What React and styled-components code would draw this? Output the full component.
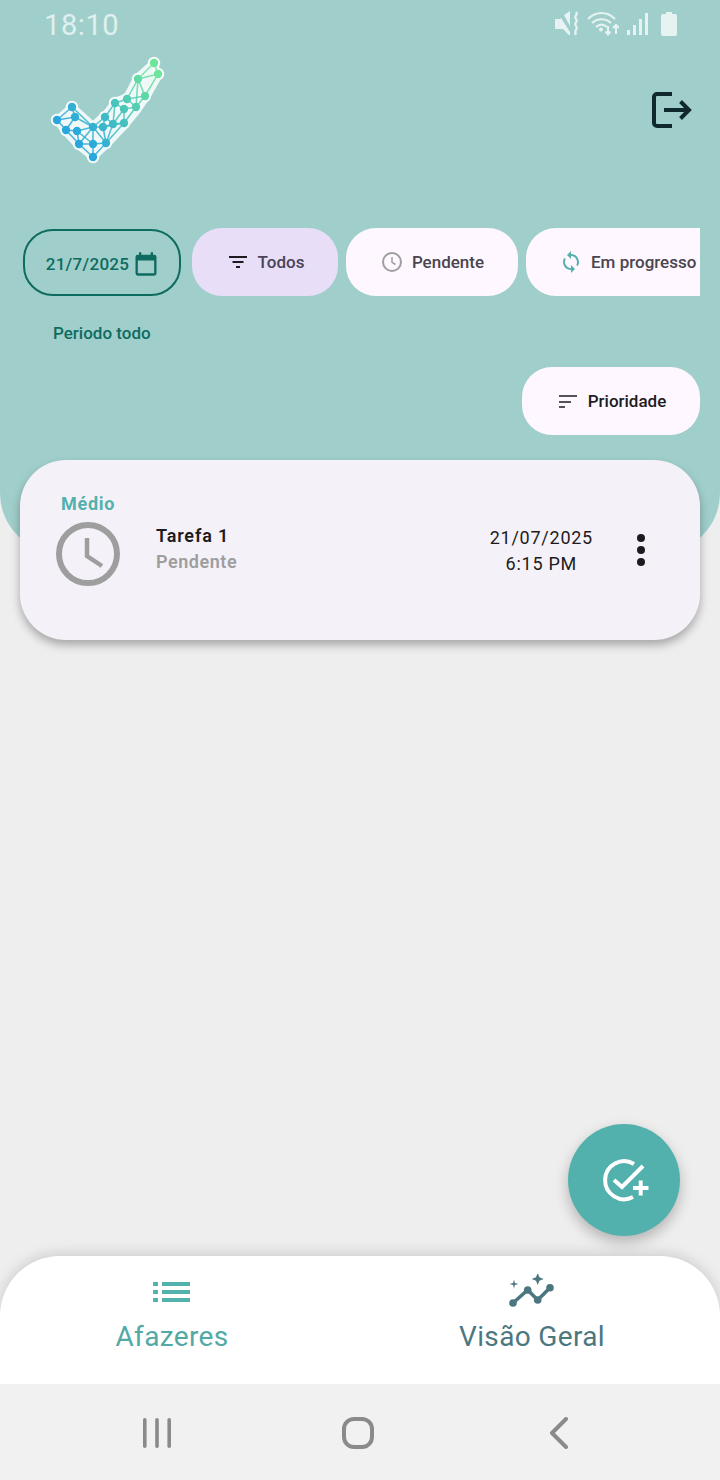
import React from "react";
import styled, { createGlobalStyle } from "styled-components";

const Global = createGlobalStyle`
  html, body { margin: 0; padding: 0; background: #eeeeee; }
  * { box-sizing: border-box; }
  body { font-family: Roboto, "Liberation Sans", sans-serif; }
`;

const Page = styled.div`
  position: relative;
  width: 720px;
  height: 1480px;
  display: flex;
  flex-direction: column;
  overflow: hidden;
  background: #eeeeee;
`;

const Header = styled.header`
  height: 553px;
  flex: none;
  background: #a0cfcb;
  border-radius: 0 0 60px 60px;
  display: flex;
  flex-direction: column;
`;

const StatusBar = styled.div`
  height: 50px;
  padding: 0 43px 0 44px;
  display: flex;
  align-items: center;
  justify-content: space-between;
`;

const Time = styled.span`
  font-size: 29px;
  line-height: 50px;
  color: #dff0ee;
  letter-spacing: 0.6px;
`;

const StatusIcons = styled.div`
  display: flex;
  align-items: center;
  height: 50px;
  margin-top: -2px;
`;

const TopRow = styled.div`
  height: 128px;
  padding: 0 28px 0 40px;
  display: flex;
  align-items: flex-start;
  justify-content: space-between;
`;

const LogoutWrap = styled.div`
  margin-top: 42px;
  line-height: 0;
`;

const Chips = styled.div`
  margin: 50px 20px 0 23px;
  display: flex;
  gap: 8px;
  overflow: hidden;
  align-items: flex-start;
`;

const DateColumn = styled.div`
  flex: none;
  width: 158px;
  margin-right: 3px;
`;

const DateChip = styled.div`
  height: 67px;
  margin-top: 1px;
  border: 2px solid #0e6b5f;
  border-radius: 30px;
  display: flex;
  align-items: center;
  justify-content: center;
  gap: 3px;
  padding: 2px 0 0 2px;
  color: #0e6b5f;
  font-size: 17px;
  font-weight: 500;
  letter-spacing: 0.3px;
`;

const Chip = styled.div`
  flex: none;
  width: ${(p) => p.$w}px;
  height: 68px;
  border-radius: ${(p) => (p.$clip ? "30px 0 0 30px" : "30px")};
  background: ${(p) => p.$bg || "#fef7ff"};
  color: ${(p) => p.$color || "#49454f"};
  display: flex;
  align-items: center;
  justify-content: ${(p) => (p.$clip ? "flex-start" : "center")};
  padding-left: ${(p) => (p.$clip ? "33px" : "0")};
  gap: 8px;
  font-size: 17px;
  font-weight: 500;
  white-space: nowrap;
`;

const PeriodLabel = styled.div`
  margin: 26px 0 0 30px;
  font-size: 17px;
  line-height: 22px;
  font-weight: 500;
  white-space: nowrap;
  color: #0e6b5f;
`;

const SortRow = styled.div`
  margin-top: 23px;
  padding-right: 20px;
  display: flex;
  justify-content: flex-end;
`;

const Card = styled.article`
  flex: none;
  position: relative;
  margin: -93px 20px 0;
  height: 180px;
  border-radius: 46px;
  background: #f5f1f9;
  box-shadow: 0 5px 10px rgba(0, 0, 0, 0.3);
  padding: 32px 36px 0 36px;
`;

const Priority = styled.div`
  margin-left: 5px;
  font-size: 18px;
  line-height: 24px;
  font-weight: 700;
  letter-spacing: 0.7px;
  color: #52b1ad;
`;

const CardRow = styled.div`
  display: flex;
  align-items: flex-start;
  margin-top: 6px;
`;

const TaskText = styled.div`
  margin-left: 36px;
  flex: 1;
`;

const TaskTitle = styled.div`
  font-size: 18px;
  line-height: 26px;
  margin-top: 1px;
  font-weight: 600;
  letter-spacing: 0.85px;
  color: #1d1b20;
`;

const TaskStatus = styled.div`
  font-size: 18px;
  line-height: 26px;
  font-weight: 600;
  letter-spacing: 0.55px;
  color: #9e9e9e;
`;

const When = styled.div`
  text-align: center;
  font-size: 18px;
  line-height: 26px;
  margin-top: 3px;
  letter-spacing: 0.75px;
  color: #1d1b20;
`;

const More = styled.div`
  margin: 11px 18px 0 43px;
  line-height: 0;
`;

const Spacer = styled.main`
  flex: 1;
`;

const Fab = styled.button`
  position: absolute;
  left: 568px;
  top: 1124px;
  width: 112px;
  height: 112px;
  border: 0;
  padding: 0;
  border-radius: 50%;
  background: #52b1ad;
  box-shadow: 0 6px 14px rgba(0, 0, 0, 0.25);
  display: flex;
  align-items: center;
  justify-content: center;
`;

const BottomNav = styled.nav`
  flex: none;
  height: 128px;
  background: #ffffff;
  border-radius: 60px 60px 0 0;
  box-shadow: 0 -2px 14px rgba(0, 0, 0, 0.15);
  display: flex;
  position: relative;
`;

const Tab = styled.div`
  flex: none;
  width: ${(p) => p.$w}px;
  display: flex;
  flex-direction: column;
  align-items: center;
  padding-top: 16px;
  color: ${(p) => p.$color};
`;

const TabIcon = styled.div`
  height: 40px;
  display: flex;
  align-items: center;
  margin-bottom: 9px;
`;

const TabLabel = styled.div`
  font-size: 28px;
  line-height: 32px;
  letter-spacing: 0.35px;
`;

const SystemBar = styled.div`
  flex: none;
  height: 96px;
  padding-top: 2px;
  background: #f1f1f1;
  display: flex;
  align-items: center;
  position: relative;
`;

const SysSlot = styled.div`
  flex: none;
  width: ${(p) => p.$w}px;
  margin-left: ${(p) => p.$ml}px;
  line-height: 0;
`;

const Logo = () => {
  const nodes = [
    [154, 63], [158, 74], [138, 79], [145, 96], [127, 99], [115, 103], [136, 107], [105, 117],
    [124, 123], [113, 124], [103, 127], [93, 127], [72, 107], [57, 120], [75, 117], [66, 130],
    [79, 144], [93, 144], [106, 143], [93, 157], [77, 131], [124, 109],
  ];
  const links = [
    [0, 1], [0, 2], [1, 2], [1, 3], [2, 3], [2, 4], [3, 6], [3, 4], [4, 5], [4, 6], [5, 7], [5, 21], [21, 6], [21, 8], [6, 8], [7, 9],
    [7, 11], [8, 9], [9, 10], [10, 11], [8, 18], [9, 18], [10, 18], [11, 18], [18, 17], [18, 19], [11, 17], [11, 16], [11, 20], [11, 14],
    [12, 13], [12, 14], [13, 14], [13, 15], [14, 15], [15, 20], [15, 16], [20, 16], [20, 17], [16, 17], [16, 19], [17, 19], [12, 11],
    [5, 9], [21, 9], [7, 10], [2, 6], [8, 10],
  ];
  const hull = "154,59 162,75 149,98 140,111 127,127 108,147 93,161 76,147 63,133 53,120 72,103 93,122 104,112 114,99 125,95 135,76";
  return (
    <svg width="130" height="120" viewBox="40 50 130 120" style={{ display: "block" }}>
      <defs>
        <linearGradient id="lg" gradientUnits="userSpaceOnUse" x1="75" y1="135" x2="150" y2="70">
          <stop offset="0" stopColor="#29a7dc" />
          <stop offset="0.45" stopColor="#45c0c0" />
          <stop offset="1" stopColor="#6de59b" />
        </linearGradient>
      </defs>
      <polygon points={hull} fill="#eef8f7" stroke="#eef8f7" strokeWidth="2" strokeLinejoin="round" />
      <g fill="#f4fbfa">
        {nodes.map(([x, y], i) => (
          <circle key={i} cx={x} cy={y} r="6.200" />
        ))}
      </g>
      <g stroke="url(#lg)" fill="url(#lg)">
        {links.map(([a, b], i) => (
          <line key={i} x1={nodes[a][0]} y1={nodes[a][1]} x2={nodes[b][0] + 0.01} y2={nodes[b][1] + 0.01} strokeWidth="1.500" opacity="0.85" />
        ))}
        {nodes.map(([x, y], i) => (
          <circle key={i} cx={x} cy={y} r="4.200" stroke="none" />
        ))}
      </g>
    </svg>
  );
};

const MuteIcon = () => (
  <svg width="26" height="26" viewBox="0 0 26 26" style={{ display: "block" }}>
    <path d="M0 8h5l1-1 9 14v3h-1l-6-6H0z" fill="#e6f3f2" />
    <path d="M9 4l6-4v15z" fill="#e6f3f2" />
    <path d="M21 1c3 3-3 4 0 7s-3 4 0 7-3 4 0 9" stroke="#e6f3f2" strokeWidth="2.200" fill="none" />
  </svg>
);

const WifiIcon = () => (
  <svg width="32" height="26" viewBox="0 0 32 26" style={{ display: "block", marginLeft: 6 }}>
    <path d="M1 8c8-8 19-8 27 0" stroke="#e6f3f2" strokeWidth="2.200" fill="none" />
    <path d="M5 12c5.500-5 13.500-5 19 0" stroke="#e6f3f2" strokeWidth="2.200" fill="none" />
    <path d="M9 16c3.500-3 7.500-3 11 0" stroke="#e6f3f2" strokeWidth="2.200" fill="none" />
    <circle cx="14" cy="18.500" r="2" fill="#e6f3f2" />
    <path d="M21 15v8M18.500 20.500l2.500 3 2.500-3" stroke="#e6f3f2" strokeWidth="2" fill="none" />
    <path d="M29 23v-9M26 17l3-3 3 3" stroke="#e6f3f2" strokeWidth="2" fill="none" />
  </svg>
);

const SignalIcon = () => (
  <svg width="22" height="24" viewBox="0 0 22 24" style={{ display: "block", marginLeft: 8 }}>
    <rect x="0" y="18" width="3" height="5" fill="#e6f3f2" />
    <rect x="6" y="13" width="3" height="10" fill="#e6f3f2" />
    <rect x="12" y="7" width="3" height="16" fill="#e6f3f2" />
    <rect x="18" y="1" width="3" height="22" fill="#e6f3f2" />
  </svg>
);

const BatteryIcon = () => (
  <svg width="16" height="24" viewBox="0 0 16 24" style={{ display: "block", marginLeft: 12 }}>
    <path d="M5 0h6v2h3a2 2 0 0 1 2 2v18a2 2 0 0 1-2 2H2a2 2 0 0 1-2-2V4a2 2 0 0 1 2-2h3z" fill="#e6f3f2" />
  </svg>
);

const LogoutIcon = () => (
  <svg width="40" height="36" viewBox="0 0 40 36" fill="none" stroke="#10292f" strokeWidth="4">
    <path d="M20 2H5a3 3 0 0 0-3 3v26a3 3 0 0 0 3 3h15" />
    <path d="M12 18h25M28.500 9.500l8.500 8.500-8.500 8.500" />
  </svg>
);

const CalendarIcon = () => (
  <svg width="28" height="28" viewBox="0 0 24 24" fill="#0e6b5f">
    <path d="M19 4h-1V2h-2v2H8V2H6v2H5a2 2 0 0 0-2 2v14a2 2 0 0 0 2 2h14a2 2 0 0 0 2-2V6a2 2 0 0 0-2-2zm0 16H5V9h14z" />
  </svg>
);

const FilterIcon = () => (
  <svg width="24" height="24" viewBox="0 0 24 24" fill="#1d1b20">
    <path d="M3 6h18v2H3zM6.500 11h11v2h-11zM10 16h4v2h-4z" />
  </svg>
);

const ClockSmall = () => (
  <svg width="24" height="24" viewBox="0 0 24 24" fill="none" stroke="#9e9e9e" strokeWidth="2">
    <circle cx="12" cy="12" r="9" />
    <path d="M12 7v5.300l3.500 2.200" strokeWidth="1.500" />
  </svg>
);

const SyncIcon = () => (
  <svg width="24" height="24" viewBox="0 0 24 24" fill="#52b1ad">
    <path d="M12 4V1L8 5l4 4V6c3.310 0 6 2.690 6 6 0 1.010-.25 1.970-.7 2.800l1.460 1.460C19.540 15.030 20 13.570 20 12c0-4.420-3.580-8-8-8zm0 14c-3.310 0-6-2.690-6-6 0-1.010.25-1.970.7-2.800L5.240 7.740C4.460 8.970 4 10.430 4 12c0 4.420 3.580 8 8 8v3l4-4-4-4z" />
  </svg>
);

const SortIcon = () => (
  <svg width="24" height="24" viewBox="0 0 24 24" fill="#55505a">
    <path d="M3 6h18v2H3zM3 12h12v2H3zM3 17h6v2H3z" />
  </svg>
);

const ClockLarge = () => (
  <svg width="64" height="64" viewBox="0 0 64 64" fill="none" stroke="#9e9e9e" style={{ flex: "none" }}>
    <circle cx="32" cy="32" r="29" strokeWidth="6" />
    <path d="M31 16v18l15 10" strokeWidth="4.500" />
  </svg>
);

const DotsIcon = () => (
  <svg width="10" height="34" viewBox="0 0 10 34" fill="#1d1b20">
    <circle cx="5" cy="5" r="4" />
    <circle cx="5" cy="17" r="4" />
    <circle cx="5" cy="29" r="4" />
  </svg>
);

const FabIcon = () => (
  <svg width="56" height="56" viewBox="0 0 56 56" fill="none" stroke="#ffffff" strokeWidth="4">
    <path d="M38 12A19 19 0 1 0 37 45" />
    <path d="M18 28l8 7L47 14" />
    <path d="M37 36h15.500M44.700 28.500v15" />
  </svg>
);

const ListIcon = () => (
  <svg width="38" height="20" viewBox="0 0 38 20" fill="#52b1ad">
    <rect x="0" y="0" width="5" height="4" />
    <rect x="0" y="8" width="5" height="4" />
    <rect x="0" y="16" width="5" height="4" />
    <rect x="9" y="0" width="28" height="4" />
    <rect x="9" y="8" width="28" height="4" />
    <rect x="9" y="16" width="28" height="4" />
  </svg>
);

const InsightsIcon = () => (
  <svg width="46" height="34" viewBox="0 0 46 34" fill="#4c7780" style={{ marginTop: -3 }}>
    <circle cx="4" cy="29" r="3.800" />
    <circle cx="18.700" cy="16" r="3.800" />
    <circle cx="28.700" cy="26" r="3.800" />
    <circle cx="41" cy="13.700" r="3.800" />
    <path d="M4 29L18.700 16l10 10L41 13.700" fill="none" stroke="#4c7780" strokeWidth="3.500" />
    <path d="M28.700-1l1.700 4.300L34.700 5l-4.300 1.700L28.700 11 27 6.700 22.700 5 27 3.300z" />
    <path d="M5 5.500l.9 3.600 3.600.9-3.600.9-.9 3.600-.9-3.600-3.600-.9 3.600-.9z" />
  </svg>
);

const RecentsIcon = () => (
  <svg width="30" height="32" viewBox="0 0 30 32" fill="#8a8a8a">
    <rect x="1" y="1" width="3.600" height="30" rx="1.800" />
    <rect x="13.200" y="1" width="3.600" height="30" rx="1.800" />
    <rect x="25.400" y="1" width="3.600" height="30" rx="1.800" />
  </svg>
);

const HomeIcon = () => (
  <svg width="32" height="32" viewBox="0 0 32 32" fill="none" stroke="#8a8a8a" strokeWidth="4">
    <rect x="2" y="2" width="28" height="28" rx="10" />
  </svg>
);

const BackIcon = () => (
  <svg width="20" height="32" viewBox="0 0 20 32" fill="none" stroke="#8a8a8a" strokeWidth="4" strokeLinecap="round" strokeLinejoin="round">
    <path d="M17 2L3 16l14 14" />
  </svg>
);

export default function App() {
  return (
    <Page>
      <Global />
      <Header>
        <StatusBar>
          <Time>18:10</Time>
          <StatusIcons>
            <MuteIcon />
            <WifiIcon />
            <SignalIcon />
            <BatteryIcon />
          </StatusIcons>
        </StatusBar>
        <TopRow>
          <Logo />
          <LogoutWrap>
            <LogoutIcon />
          </LogoutWrap>
        </TopRow>
        <Chips>
          <DateColumn>
            <DateChip>
              21/7/2025
              <CalendarIcon />
            </DateChip>
            <PeriodLabel>Periodo todo</PeriodLabel>
          </DateColumn>
          <Chip $w={146} $bg="#e8def8" $color="#4a4458">
            <FilterIcon />
            Todos
          </Chip>
          <Chip $w={172}>
            <ClockSmall />
            Pendente
          </Chip>
          <Chip $w={174} $clip>
            <SyncIcon />
            Em progresso
          </Chip>
        </Chips>
        <SortRow>
          <Chip $w={178} $color="#1d1b20">
            <SortIcon />
            Prioridade
          </Chip>
        </SortRow>
      </Header>
      <Card>
        <Priority>Médio</Priority>
        <CardRow>
          <ClockLarge />
          <TaskText>
            <TaskTitle>Tarefa 1</TaskTitle>
            <TaskStatus>Pendente</TaskStatus>
          </TaskText>
          <When>
            21/07/2025
            <br />
            6:15 PM
          </When>
          <More>
            <DotsIcon />
          </More>
        </CardRow>
      </Card>
      <Spacer />
      <Fab aria-label="Nova tarefa">
        <FabIcon />
      </Fab>
      <BottomNav>
        <Tab $w={344} $color="#52a9a6">
          <TabIcon>
            <ListIcon />
          </TabIcon>
          <TabLabel>Afazeres</TabLabel>
        </Tab>
        <Tab $w={376} $color="#4c7780">
          <TabIcon>
            <InsightsIcon />
          </TabIcon>
          <TabLabel>Visão Geral</TabLabel>
        </Tab>
      </BottomNav>
      <SystemBar>
        <SysSlot $w={30} $ml={142}>
          <RecentsIcon />
        </SysSlot>
        <SysSlot $w={32} $ml={170}>
          <HomeIcon />
        </SysSlot>
        <SysSlot $w={20} $ml={175}>
          <BackIcon />
        </SysSlot>
      </SystemBar>
    </Page>
  );
}
